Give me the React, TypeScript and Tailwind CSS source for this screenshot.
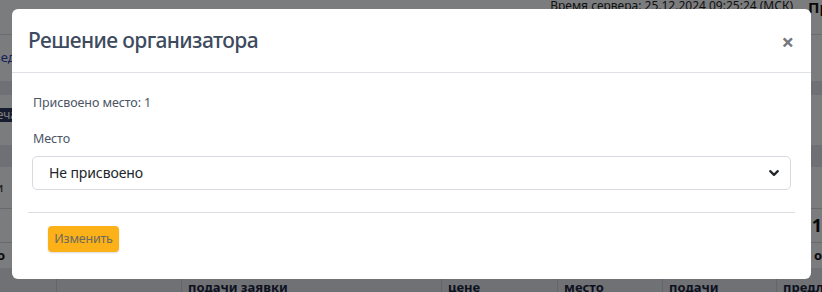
import React from "react";

const font = { fontFamily: '"Noto Sans", "Open Sans", sans-serif' };

function BackgroundPage() {
    return (
        <div className="flex h-[292px] w-[822px] flex-col overflow-hidden bg-[#f7f8fc] text-[13px] text-[#333]">
            <div className="flex h-[37px] items-start justify-end gap-[15px] border-b border-[#d5d8e2]">
                <span className="mt-[-3px] text-[12px] text-[#222]">Время сервера: 25.12.2024 09:25:24 (МСК)</span>
                <span className="mt-[-4px] w-[14px] overflow-hidden text-[15px] font-bold text-[#111]">Пр</span>
            </div>
            <div className="flex h-[48px] items-center">
                <span className="ml-[-15px] text-[#2a3fb0]">Сведения</span>
            </div>
            <div className="h-[15px] bg-[#dde0ea]" />
            <div className="flex h-[52px] items-start pt-[13px]">
                <span className="ml-[-20px] h-[14px] rounded-sm bg-[#2f3b5e] px-2 text-[12px] leading-[14px] text-white">Печать</span>
            </div>
            <div className="h-[23px] bg-[#dde0ea]" />
            <div className="flex h-[45px] items-center border-b border-[#cfd3de]">
                <span className="ml-[-40px]">заявки</span>
            </div>
            <div className="flex h-[36px] items-center justify-end border-b border-[#cfd3de]">
                <span className="text-[18px] font-bold text-[#111]">1</span>
            </div>
            <div className="flex h-[26px] items-center justify-between">
                <span className="ml-[-3px] font-bold text-[#111]">о</span>
                <span className="w-[8px] overflow-hidden font-bold text-[#111]">ов</span>
            </div>
            <div className="grid h-[24px] grid-cols-[57px_125px_260px_116px_105px_114px_45px] bg-[#dfe2ea] pt-[9px] text-[13px] font-bold leading-[20px] text-[#1c2540]">
                <div className="border-r border-[#c7cbd6]" />
                <div className="border-r border-[#c7cbd6]" />
                <div className="border-r border-[#c7cbd6] pl-[6px]">подачи заявки</div>
                <div className="border-r border-[#c7cbd6] pl-[6px]">цене</div>
                <div className="border-r border-[#c7cbd6] pl-[6px]">место</div>
                <div className="border-r border-[#c7cbd6] pl-[6px]">подачи</div>
                <div className="pl-[6px]">предл</div>
            </div>
        </div>
    );
}

function Chevron() {
    return (
        <svg width="10" height="10" viewBox="0 0 16 16" fill="none">
            <path d="M2 5l6 6 6-6" stroke="#212529" strokeWidth="3.4" strokeLinecap="round" strokeLinejoin="round" />
        </svg>
    );
}

export default function App() {
    return (
        <div className="relative h-[292px] w-[822px] overflow-hidden" style={font}>
            <BackgroundPage />
            <div className="absolute inset-0 bg-black/50" />
            <div className="absolute left-[12px] top-[9px] w-[799px] rounded-[6px] bg-white">
                <div className="flex h-[64px] items-center justify-between border-b border-[#dee2e6] pl-4 pr-[17px]">
                    <h5 className="text-[21px] font-medium leading-none tracking-[-0.6px] text-[#3e4a5e]">Решение организатора</h5>
                    <span className="text-[22px] font-bold leading-none text-[#74767e]">×</span>
                </div>
                <div className="px-5 pt-[20px] text-[12.5px] leading-[20px] tracking-[-0.1px] text-[#4b5565]">
                    <p className="pl-px">Присвоено место: 1</p>
                    <p className="mt-4 pl-px">Место</p>
                    <div className="mt-[7px] flex h-[34px] items-center justify-between rounded-[5px] border border-[#d7dae0] pl-4 pr-[11px] text-[14px] tracking-[-0.1px] text-[#212529]">
                        <span>Не присвоено</span>
                        <Chevron />
                    </div>
                </div>
                <div className="mx-4 mt-[22px] border-t border-[#dcdde3] px-5 pb-[27px] pt-[12px]">
                    <button className="h-[26px] w-[71px] rounded-[4px] bg-[#fbb117] text-[12.5px] tracking-[-0.2px] text-[#6e6a60] shadow-[0_1px_2px_rgba(0,0,0,0.15)]">
                        Изменить
                    </button>
                </div>
            </div>
        </div>
    );
}
